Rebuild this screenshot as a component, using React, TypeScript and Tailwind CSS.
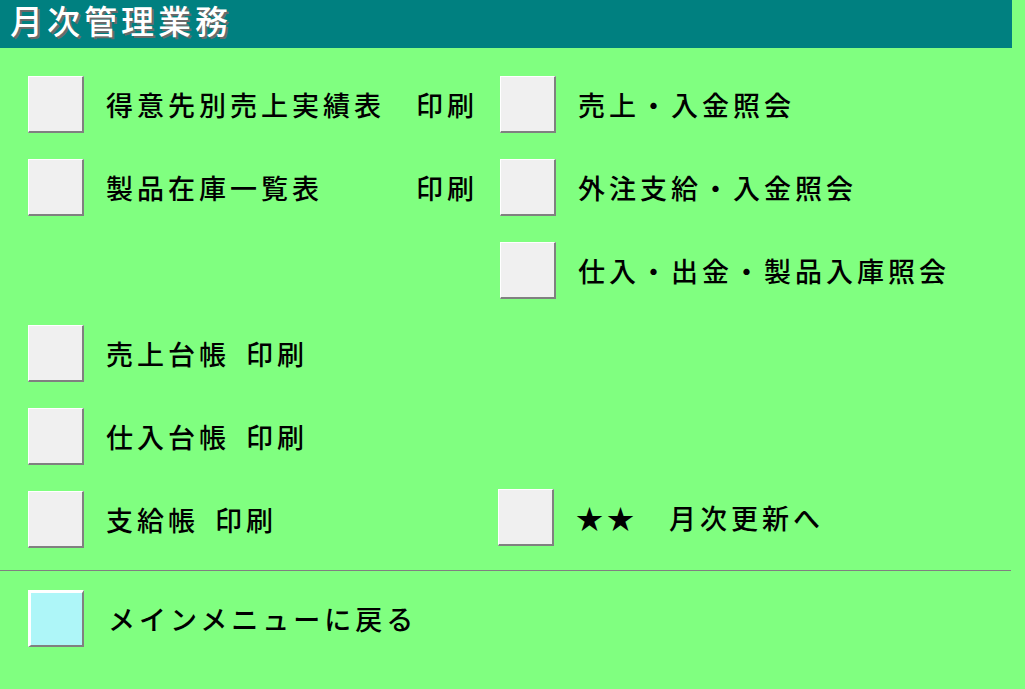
import React from 'react';

const FONT = '"Noto Sans CJK JP", "Noto Sans", sans-serif';

interface MenuRow {
  left?: { label: string; suffix?: string; suffixAt?: 'col' | 'inline' };
  right?: { label: string; shifted?: boolean };
}

const ROWS: MenuRow[] = [
  { left: { label: '得意先別売上実績表', suffix: '印刷', suffixAt: 'col' }, right: { label: '売上・入金照会' } },
  { left: { label: '製品在庫一覧表', suffix: '印刷', suffixAt: 'col' }, right: { label: '外注支給・入金照会' } },
  { right: { label: '仕入・出金・製品入庫照会' } },
  { left: { label: '売上台帳', suffix: '印刷', suffixAt: 'inline' } },
  { left: { label: '仕入台帳', suffix: '印刷', suffixAt: 'inline' } },
  { left: { label: '支給帳', suffix: '印刷', suffixAt: 'inline' }, right: { label: '★★　月次更新へ', shifted: true } },
];

const SquareButton: React.FC<{ className?: string }> = ({ className = '' }) => (
  <button
    type="button"
    className={`w-[56px] h-[57px] shrink-0 bg-[#f0f0f0] border-t border-l border-white border-b-2 border-r-2 border-b-[#808080] border-r-[#808080] ${className}`}
  />
);

export default function App() {
  return (
    <div
      className="w-full h-[689px] bg-[#80ff80] text-black overflow-hidden"
      style={{ fontFamily: FONT }}
    >
      {/* title bar */}
      <div className="w-[1012px] h-[48px] bg-[#008080] pl-[10px]">
        <h1 className="text-[33px] leading-[41px] tracking-[4px] text-white font-medium [text-shadow:2px_2px_0_#6a6a6a]">
          月次管理業務
        </h1>
      </div>

      {/* menu rows */}
      <div className="flex flex-col gap-y-[26px] pt-[28px]">
        {ROWS.map((row, i) => (
          <div key={i} className="flex h-[57px]">
            <div className="w-[500px] pl-[28px] flex items-center">
              {row.left && (
                <>
                  <SquareButton />
                  <div className="ml-[22px] flex items-center text-[27px] leading-none tracking-[4px] font-medium">
                    {row.left.suffixAt === 'col' ? (
                      <>
                        <span className="w-[310px]">{row.left.label}</span>
                        <span>{row.left.suffix}</span>
                      </>
                    ) : (
                      <>
                        <span>{row.left.label}</span>
                        <span className="ml-[16px]">{row.left.suffix}</span>
                      </>
                    )}
                  </div>
                </>
              )}
            </div>
            <div className={`flex items-center ${row.right?.shifted ? '-ml-[2px] -mt-[4px]' : ''}`}>
              {row.right && (
                <>
                  <SquareButton />
                  <span className="ml-[22px] text-[27px] leading-none tracking-[4px] font-medium">
                    {row.right.label}
                  </span>
                </>
              )}
            </div>
          </div>
        ))}
      </div>

      {/* separator */}
      <div className="w-[1011px] h-px bg-[#808080] mt-[22px]" />

      {/* return to main menu */}
      <div className="flex items-center pl-[28px] mt-[19px]">
        <button
          type="button"
          className="w-[56px] h-[57px] shrink-0 bg-[#aef6f8] border-t-[3px] border-l-[3px] border-white border-b-2 border-r-2 border-b-[#808080] border-r-[#808080]"
        />
        <span className="ml-[24px] text-[27px] leading-none tracking-[4px] font-medium">
          メインメニューに戻る
        </span>
      </div>
    </div>
  );
}
